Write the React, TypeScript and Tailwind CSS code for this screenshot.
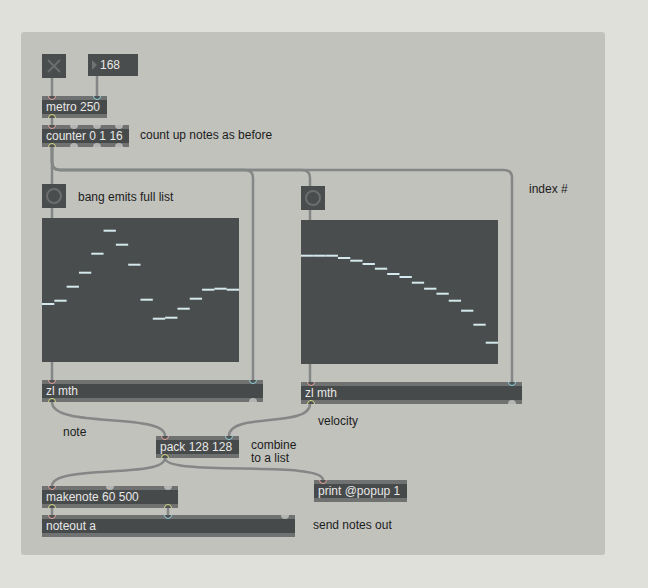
import React from 'react';
import clsx from 'clsx';

type PortKind = 'hot' | 'cold' | 'out' | 'off';

const portStyle: Record<PortKind, string> = {
  hot: 'border-[1.5px] border-[#e7a3a1] bg-[#4f5252]',
  cold: 'border-[1.5px] border-[#8fd0dd] bg-[#4f5252]',
  out: 'border-[1.5px] border-[#d9dc86] bg-[#4f5252]',
  off: 'bg-[#b3b5b2]',
};

const Port = ({ kind, at, bottom }: { kind: PortKind; at: string; bottom?: boolean }) => (
  <span
    className={clsx(
      'absolute w-[8px] h-[8px] rounded-full',
      bottom ? 'bottom-[-4px]' : 'top-[-4px]',
      at,
      portStyle[kind]
    )}
  />
);

const MaxBox = ({ text, className, children }: { text: string; className: string; children?: React.ReactNode }) => (
  <div className={clsx('absolute overflow-hidden bg-[#6f7271] py-[4px]', className)}>
    <div className="h-full bg-[#474a4a] flex items-center px-[4px] text-[#e8e8e8] leading-none whitespace-nowrap">
      {text}
    </div>
    {children}
  </div>
);

const Comment = ({ className, children }: { className: string; children: React.ReactNode }) => (
  <div className={clsx('absolute text-[#1c1c1c] whitespace-nowrap', className)}>{children}</div>
);

const Bang = ({ className }: { className: string }) => (
  <div className={clsx('absolute w-[24px] h-[24px] bg-[#4a4d4d] flex items-center justify-center', className)}>
    <div className="w-[16px] h-[16px] rounded-full border-2 border-[#6b6e6d]" />
  </div>
);

const SLIDER_W = 197 / 16;

const MultiSlider = ({ values, className }: { values: number[]; className: string }) => (
  <div className={clsx('absolute w-[197px] h-[144px] bg-[#4a4d4d]', className)}>
    <svg width="197" height="144" className="block">
      {values.map((v, i) => (
        <rect key={i} x={i * SLIDER_W} y={v - 1} width={SLIDER_W} height={2} fill="#d3e9ed" />
      ))}
    </svg>
  </div>
);

const notes = [86, 82.7, 68.7, 54.7, 35.7, 12.7, 26.7, 46.7, 81.7, 100.7, 99.7, 90.7, 80.7, 71.7, 70.7, 71.7];
const velocities = [35.7, 35.7, 35.7, 38, 40.7, 44, 48.7, 54, 57, 62.7, 68.7, 73.7, 80.7, 90.7, 104.7, 122.7];

const cords = [
  'M31 46 V64',
  'M76 44 V64',
  'M31 86 V93',
  'M31 115 V348',
  'M31 115 V130 Q31 138 39 138 H224 Q232 138 232 146 V348',
  'M31 115 V130 Q31 138 39 138 H281 Q289 138 289 146 V350',
  'M31 115 V130 Q31 138 39 138 H483 Q491 138 491 146 V350',
  'M31 370 C31 397 144 380 144 404',
  'M289 372 C289 396 208 380 208 404',
  'M144 426 C144 447 31 432 31 454',
  'M144 426 C144 445 302 428 302 448',
  'M31 476 V483',
  'M147 476 V483',
];

export default function App() {
  return (
    <div className="w-[648px] h-[588px] bg-[#dfe0da] pt-[32px] pl-[21px] font-['Liberation_Sans',Arial,sans-serif] text-[12px]">
      <div className="relative w-[584px] h-[523px] rounded-[3px] bg-[#c1c2bc]">
        {/* patch cords */}
        <svg width="584" height="523" className="absolute left-0 top-0">
          {cords.map((d, i) => (
            <path key={i} d={d} fill="none" stroke="#858786" strokeWidth={2.5} strokeLinecap="round" />
          ))}
        </svg>

        {/* toggle */}
        <div className="absolute left-[21px] top-[22px] w-[24px] h-[24px] bg-[#4a4d4d]">
          <svg width="24" height="24" className="block">
            <path d="M6 6 L18 18 M18 6 L6 18" stroke="#6b6e6d" strokeWidth={2} />
          </svg>
        </div>

        {/* number box */}
        <div className="absolute left-[67px] top-[22px] w-[50px] h-[22px] bg-[#4a4d4d] flex items-center text-[#e8e8e8]">
          <svg width="12" height="22" className="block shrink-0">
            <path d="M4 6 L9 11 L4 16 Z" fill="#707372" />
          </svg>
          <span className="leading-none">168</span>
        </div>

        <MaxBox text="metro 250" className="left-[21px] top-[64px] w-[65px] h-[22px]">
          <Port kind="hot" at="left-[6px]" />
          <Port kind="cold" at="left-[51px]" />
          <Port kind="out" at="left-[6px]" bottom />
        </MaxBox>

        <MaxBox text="counter 0 1 16" className="left-[21px] top-[93px] w-[87px] h-[22px]">
          <Port kind="hot" at="left-[6px]" />
          <Port kind="off" at="left-[28px]" />
          <Port kind="off" at="left-[51px]" />
          <Port kind="off" at="left-[73px]" />
          <Port kind="out" at="left-[6px]" bottom />
          <Port kind="off" at="left-[28px]" bottom />
          <Port kind="off" at="left-[51px]" bottom />
          <Port kind="off" at="left-[73px]" bottom />
        </MaxBox>
        <Comment className="left-[119px] top-[96px] leading-[14px]">count up notes as before</Comment>

        <Bang className="left-[21px] top-[152px]" />
        <Comment className="left-[57px] top-[158px] leading-[14px]">bang emits full list</Comment>
        <MultiSlider values={notes} className="left-[21px] top-[186px]" />

        <Bang className="left-[280px] top-[154px]" />
        <MultiSlider values={velocities} className="left-[280px] top-[188px]" />
        <Comment className="left-[508px] top-[150px] leading-[14px]">index #</Comment>

        <MaxBox text="zl mth" className="left-[21px] top-[348px] w-[221px] h-[22px]">
          <Port kind="hot" at="left-[6px]" />
          <Port kind="cold" at="left-[207px]" />
          <Port kind="out" at="left-[6px]" bottom />
          <Port kind="off" at="left-[207px]" bottom />
        </MaxBox>

        <MaxBox text="zl mth" className="left-[280px] top-[350px] w-[221px] h-[22px]">
          <Port kind="hot" at="left-[6px]" />
          <Port kind="cold" at="left-[207px]" />
          <Port kind="out" at="left-[6px]" bottom />
          <Port kind="off" at="left-[207px]" bottom />
        </MaxBox>

        <Comment className="left-[42px] top-[393px] leading-[14px]">note</Comment>
        <Comment className="left-[297px] top-[382px] leading-[14px]">velocity</Comment>

        <MaxBox text="pack 128 128" className="left-[135px] top-[404px] w-[83px] h-[22px]">
          <Port kind="hot" at="left-[5px]" />
          <Port kind="cold" at="left-[69px]" />
          <Port kind="out" at="left-[5px]" bottom />
        </MaxBox>
        <Comment className="left-[230px] top-[407px] leading-[13px]">
          combine
          <br />
          to a list
        </Comment>

        <MaxBox text="print @popup 1" className="left-[293px] top-[448px] w-[93px] h-[22px]">
          <Port kind="hot" at="left-[5px]" />
        </MaxBox>

        <MaxBox text="makenote 60 500" className="left-[21px] top-[454px] w-[136px] h-[22px]">
          <Port kind="hot" at="left-[6px]" />
          <Port kind="off" at="left-[64px]" />
          <Port kind="off" at="left-[122px]" />
          <Port kind="out" at="left-[6px]" bottom />
          <Port kind="out" at="left-[122px]" bottom />
        </MaxBox>

        <MaxBox text="noteout a" className="left-[21px] top-[483px] w-[253px] h-[22px]">
          <Port kind="hot" at="left-[6px]" />
          <Port kind="cold" at="left-[122px]" />
          <Port kind="off" at="left-[239px]" />
        </MaxBox>
        <Comment className="left-[292px] top-[486px] leading-[14px]">send notes out</Comment>
      </div>
    </div>
  );
}
